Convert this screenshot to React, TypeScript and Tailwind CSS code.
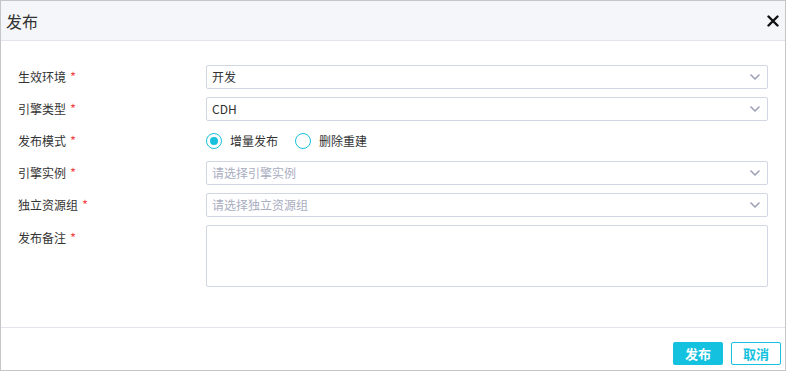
import React from 'react';

const FONT = { fontFamily: '"Noto Sans CJK SC", "Noto Sans", sans-serif' };

const Label: React.FC<{ text: string }> = ({ text }) => (
  <div className="w-[188px] shrink-0 text-[12px] text-[#333]">
    {text}
    <span className="ml-[4px] text-[13px] text-[#f5484b]">*</span>
  </div>
);

const Chevron = () => (
  <svg width="10" height="6" viewBox="0 0 10 6" className="shrink-0">
    <path d="M1 1l4 4 4-4" fill="none" stroke="#9ca1b6" strokeWidth="1.6" strokeLinecap="round" strokeLinejoin="round" />
  </svg>
);

const Select: React.FC<{ value?: string; placeholder?: string }> = ({ value, placeholder }) => (
  <div className="flex h-[24px] flex-1 items-center justify-between rounded-[2px] border border-[#d2d5e3] bg-white pl-[5px] pr-[7px] text-[12px]">
    {value ? <span className="text-[#333]">{value}</span> : <span className="text-[#a9adc0]">{placeholder}</span>}
    <Chevron />
  </div>
);

const Radio: React.FC<{ label: string; checked?: boolean }> = ({ label, checked }) => (
  <div className="flex items-center gap-[8px]">
    <span className="flex h-[16px] w-[16px] items-center justify-center rounded-full border-[1.5px] border-[#17c1dd] bg-white">
      {checked && <span className="h-[8px] w-[8px] rounded-full bg-[#17c1dd]" />}
    </span>
    <span className="text-[12px] text-[#333]">{label}</span>
  </div>
);

export default function App() {
  return (
    <div style={FONT} className="flex h-[371px] w-[786px] flex-col border border-[#c6c6c6] bg-white">
      <div className="flex h-[40px] shrink-0 items-center justify-between border-b border-[#e3e5ee] bg-[#f5f6f9] pl-[5px] pr-[6px]">
        <span className="text-[16px] text-[#333]">发布</span>
        <svg width="12" height="12" viewBox="0 0 12 12">
          <path d="M1.5 1.5l9 9M10.5 1.5l-9 9" stroke="#111" strokeWidth="2.4" strokeLinecap="round" />
        </svg>
      </div>

      <div className="flex flex-1 flex-col gap-[8px] pl-[17px] pr-[17px] pt-[24px]">
        <div className="flex items-center">
          <Label text="生效环境" />
          <Select value="开发" />
        </div>
        <div className="flex items-center">
          <Label text="引擎类型" />
          <Select value="CDH" />
        </div>
        <div className="flex h-[24px] items-center">
          <Label text="发布模式" />
          <div className="flex items-center gap-[17px]">
            <Radio label="增量发布" checked />
            <Radio label="删除重建" />
          </div>
        </div>
        <div className="flex items-center">
          <Label text="引擎实例" />
          <Select placeholder="请选择引擎实例" />
        </div>
        <div className="flex items-center">
          <Label text="独立资源组" />
          <Select placeholder="请选择独立资源组" />
        </div>
        <div className="flex items-start">
          <div className="pt-[3px]">
            <Label text="发布备注" />
          </div>
          <div className="h-[62px] flex-1 rounded-[2px] border border-[#d2d5e3] bg-white" />
        </div>
      </div>

      <div className="flex h-[43px] shrink-0 items-start justify-end gap-[8px] border-t border-[#e3e5ee] pr-[4px] pt-[14px]">
        <button className="h-[23px] w-[50px] rounded-[2px] bg-[#14c1de] text-[13px] font-semibold text-white">发布</button>
        <button className="h-[23px] w-[50px] rounded-[2px] border border-[#14c1de] bg-white text-[13px] font-semibold text-[#14c1de]">取消</button>
      </div>
    </div>
  );
}
